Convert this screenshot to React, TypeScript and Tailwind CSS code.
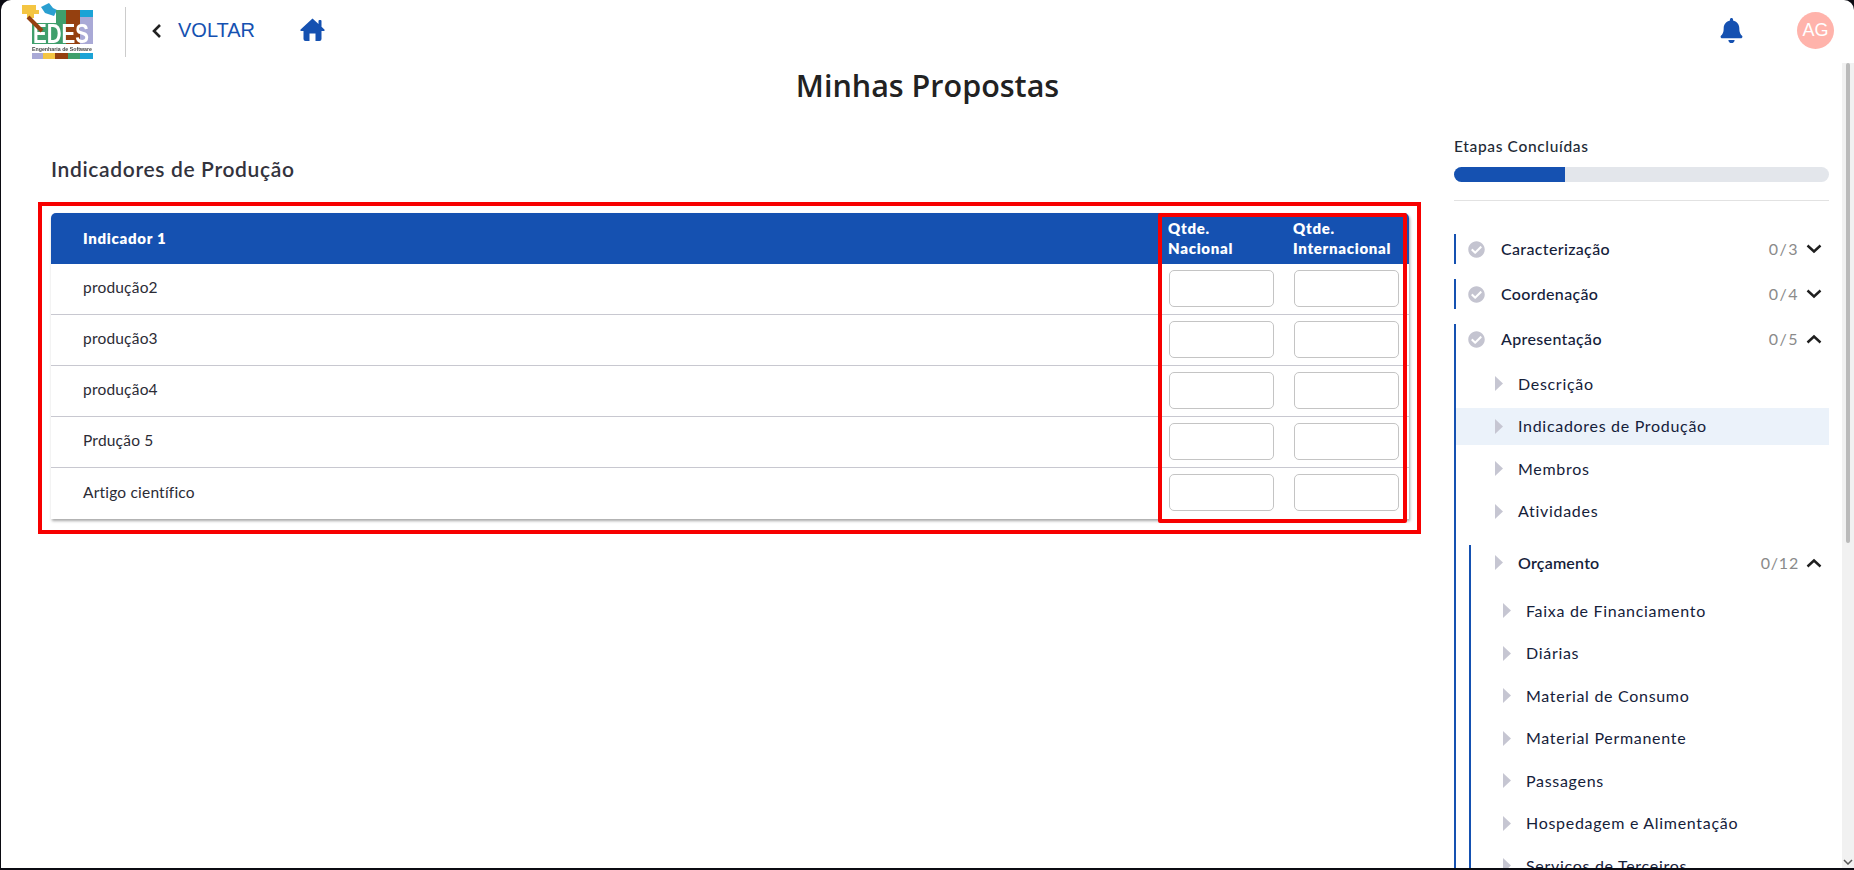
import { FaBell, FaCheckCircle } from "react-icons/fa";

const BLUE = "#1551b1";

const ROWS = ["produção2", "produção3", "produção4", "Prdução 5", "Artigo científico"];

const BUDGET_ITEMS = [
  "Faixa de Financiamento",
  "Diárias",
  "Material de Consumo",
  "Material Permanente",
  "Passagens",
  "Hospedagem e Alimentação",
  "Serviços de Terceiros",
];

function Logo() {
  return (
    <svg width="72" height="57" viewBox="0 0 72 57" className="shrink-0 blur-[0.4px]">
      <path d="M0 2 H14 V7 H17 V11 H12 V15 H5 V11 H0 Z" fill="#f4c542" />
      <path d="M19 4 L27 0 L31 5 L35 7 L32 13 L23 10 Z" fill="#2a9fd0" />
      <rect x="34" y="7" width="10" height="34" fill="#3f9f6c" />
      <rect x="10" y="20" width="24" height="21" fill="#3f9f6c" />
      <rect x="44" y="7" width="14" height="34" fill="#95400f" />
      <rect x="58" y="7" width="13" height="7" fill="#1ba3d6" />
      <rect x="58" y="14" width="13" height="27" fill="#a9a9d6" />
      <text transform="translate(11 40) scale(1 1.35)" fontFamily="Liberation Sans, sans-serif" fontWeight="700" fontSize="20" textLength="56" lengthAdjust="spacingAndGlyphs" fill="#ffffff">
        EDES
      </text>
      <path d="M6 14 L20 28" stroke="#95400f" strokeWidth="4" />
      <text x="10" y="47.5" fontFamily="Liberation Sans, sans-serif" fontWeight="700" fontSize="5.2" textLength="60" lengthAdjust="spacingAndGlyphs" fill="#444444">
        Engenharia de Software
      </text>
      <rect x="10" y="50" width="11" height="6" fill="#a9a9d6" />
      <rect x="21" y="50" width="12" height="6" fill="#f4c542" />
      <rect x="33" y="50" width="13" height="6" fill="#95400f" />
      <rect x="46" y="50" width="12" height="6" fill="#3f9f6c" />
      <rect x="58" y="50" width="13" height="6" fill="#1ba3d6" />
    </svg>
  );
}

function HomeIcon() {
  return (
    <svg width="25" height="23" viewBox="0 0 25 23" className="mb-[4px] ml-[45px] shrink-0" style={{ fill: BLUE }}>
      <path d="M12.5 0.5 L18.5 6 V3 Q18.5 2 19.5 2 H20.5 Q21.5 2 21.5 3 V8.8 L24.4 11.4 Q25.2 12.8 23.8 13 H21.5 V21 Q21.5 23 19.5 23 H15.5 V15.5 H9.5 V23 H5.5 Q3.5 23 3.5 21 V13 H1.2 Q-0.2 12.8 0.6 11.4 Z" />
    </svg>
  );
}

function Chevron({ up }: { up?: boolean }) {
  return (
    <svg width="16" height="10" viewBox="0 0 16 10" className="shrink-0" fill="none" stroke="#1f1f1f" strokeWidth="2.4">
      <path d={up ? "M1.5 8.5 L8 2.5 L14.5 8.5" : "M1.5 1.5 L8 7.5 L14.5 1.5"} />
    </svg>
  );
}

function Triangle() {
  return (
    <svg width="8" height="15" viewBox="0 0 8 15" className="shrink-0">
      <polygon points="0,0 8,7.5 0,15" fill="#c6c6d2" />
    </svg>
  );
}

function StepRow({ label, count, up }: { label: string; count: string; up?: boolean }) {
  return (
    <div className="flex h-[30px] items-center pr-[7px] pl-[12px]">
      <FaCheckCircle className="shrink-0 text-[17px] text-[#c4c4d0]" />
      <span className="ml-[16px] flex-1 text-[16px] font-medium tracking-[0.35px] text-[#15213a]">{label}</span>
      <span className="mr-[7px] text-[16px] tracking-[1.5px] text-[#8a8a8a]">{count}</span>
      <Chevron up={up} />
    </div>
  );
}

function SubItem({ label, active }: { label: string; active?: boolean }) {
  return (
    <div className={`flex h-[37px] items-center gap-[15px] pl-[39px] text-[16px] tracking-[0.7px] text-[#15213a] ${active ? "bg-[#ebf2fa]" : ""}`}>
      <Triangle />
      <span>{label}</span>
    </div>
  );
}

function ProductionTable() {
  return (
    <div className="relative rounded-t-[5px] bg-white shadow-[1px_2px_3px_rgba(0,0,0,0.35)]">
      <div className="flex h-[51px] items-center rounded-t-[5px] pb-[1px] text-[15px] leading-[20px] font-extrabold tracking-[0.7px] text-white" style={{ backgroundColor: BLUE }}>
        <span className="flex-1 pl-[32px]">Indicador 1</span>
        <span className="w-[125px]">Qtde.<br />Nacional</span>
        <span className="w-[116px]">Qtde.<br />Internacional</span>
      </div>
      {ROWS.map((row, i) => (
        <div key={row} className={`flex h-[51px] items-center pb-[2px] text-[15.5px] tracking-[0.2px] text-[#2b2b35] ${i < ROWS.length - 1 ? "border-b border-[#c8c8d0]" : ""}`}>
          <span className="flex-1 pl-[32px]">{row}</span>
          <div className="flex gap-[20px] pr-[10px]">
            <input className="h-[37px] w-[105px] rounded-[5px] border border-[#c4c4c4] bg-white" />
            <input className="h-[37px] w-[105px] rounded-[5px] border border-[#c4c4c4] bg-white" />
          </div>
        </div>
      ))}
      {/* highlight drawn over the two quantity columns */}
      <div className="pointer-events-none absolute top-0 right-[2px] bottom-[-4px] w-[249px] rounded-[2px] border-4 border-[#f70000]" />
    </div>
  );
}

export default function App() {
  return (
    <div className="h-[870px] w-full overflow-hidden bg-[#0b0b12] font-['Lato',sans-serif]">
      <div className="ml-[1px] flex h-[868px] flex-col overflow-hidden rounded-t-[10px] bg-white">
        <header className="flex h-[63px] shrink-0 items-center pl-[21px]">
          <Logo />
          <div className="ml-[31px] h-[50px] w-px bg-[#cccccc]" />
          <svg width="11" height="16" viewBox="0 0 11 16" className="mb-[2px] ml-[25px]" fill="none" stroke="#222222" strokeWidth="2.6">
            <path d="M9 2 L3 8 L9 14" />
          </svg>
          <span className="mb-[4px] ml-[16px] font-['Liberation_Sans',sans-serif] text-[20px]" style={{ color: BLUE }}>VOLTAR</span>
          <HomeIcon />
          <FaBell className="mb-[2px] ml-auto text-[25px]" style={{ color: BLUE }} />
          <div className="mr-[20px] mb-[2px] ml-[53px] flex h-[37px] w-[37px] items-center justify-center rounded-full bg-[#ffb3ab] font-['Liberation_Sans',sans-serif] text-[18px] text-white">
            AG
          </div>
        </header>

        <div className="flex min-h-0 flex-1">
          <div className="min-w-0 flex-1 overflow-hidden">
            <h1 className="mt-[3px] pl-[12px] text-center font-['Open_Sans',sans-serif] text-[30.5px] leading-[38px] font-semibold text-[#222222]">
              Minhas Propostas
            </h1>
            <div className="flex">
              <main className="ml-[37px] w-[1383px] shrink-0">
                <h2 className="mt-[51px] ml-[13px] text-[21px] leading-[28px] font-semibold tracking-[0.65px] text-[#33333d]">
                  Indicadores de Produção
                </h2>
                <div className="mt-[19px] h-[332px] border-4 border-[#f70000] pt-[7px] pr-[8px] pl-[9px]">
                  <ProductionTable />
                </div>
              </main>

              <aside className="mt-[32px] ml-[33px] w-[375px] shrink-0">
                <p className="text-[15.5px] leading-[20px] font-medium tracking-[0.65px] text-[#222a35]">Etapas Concluídas</p>
                <div className="mt-[11px] h-[15px] overflow-hidden rounded-full bg-[#e3e6eb]">
                  <div className="h-full" style={{ width: "111px", backgroundColor: BLUE }} />
                </div>
                <div className="mt-[18px] h-px bg-[#e2e2e2]" />

                <div className="mt-[33px] flex flex-col gap-[15px]">
                  <div className="border-l-2" style={{ borderColor: BLUE }}>
                    <StepRow label="Caracterização" count="0/3" />
                  </div>
                  <div className="border-l-2" style={{ borderColor: BLUE }}>
                    <StepRow label="Coordenação" count="0/4" />
                  </div>
                  <div className="border-l-2" style={{ borderColor: BLUE }}>
                    <StepRow label="Apresentação" count="0/5" up />
                    <div className="mt-[11px] flex flex-col gap-[5.5px]">
                      <SubItem label="Descrição" />
                      <SubItem label="Indicadores de Produção" active />
                      <SubItem label="Membros" />
                      <SubItem label="Atividades" />
                    </div>
                    <div className="mt-[15px] ml-[13px] border-l-2 pb-[30px]" style={{ borderColor: BLUE }}>
                      <div className="flex h-[36px] items-center pr-[7px] pl-[24px]">
                        <Triangle />
                        <span className="ml-[15px] flex-1 text-[16px] font-semibold tracking-[0.2px] text-[#15213a]">Orçamento</span>
                        <span className="mr-[7px] text-[16px] tracking-[0.8px] text-[#8a8a8a]">0/12</span>
                        <Chevron up />
                      </div>
                      <div className="mt-[12px] flex flex-col gap-[6.5px]">
                        {BUDGET_ITEMS.map((item) => (
                          <div key={item} className="flex h-[36px] items-center gap-[15px] pl-[32px] text-[16px] tracking-[0.7px] text-[#15213a]">
                            <Triangle />
                            <span>{item}</span>
                          </div>
                        ))}
                      </div>
                    </div>
                  </div>
                </div>
              </aside>
            </div>
          </div>

          <div className="flex w-[12px] shrink-0 flex-col items-center bg-[#f1f1f1]">
            <div className="h-[480px] w-[4px] rounded-full bg-[#bababa]" />
            <svg width="10" height="6" viewBox="0 0 10 6" className="mt-auto mb-[3px]" fill="none" stroke="#555555" strokeWidth="1.5">
              <path d="M1 1 L5 5 L9 1" />
            </svg>
          </div>
        </div>
      </div>
    </div>
  );
}
